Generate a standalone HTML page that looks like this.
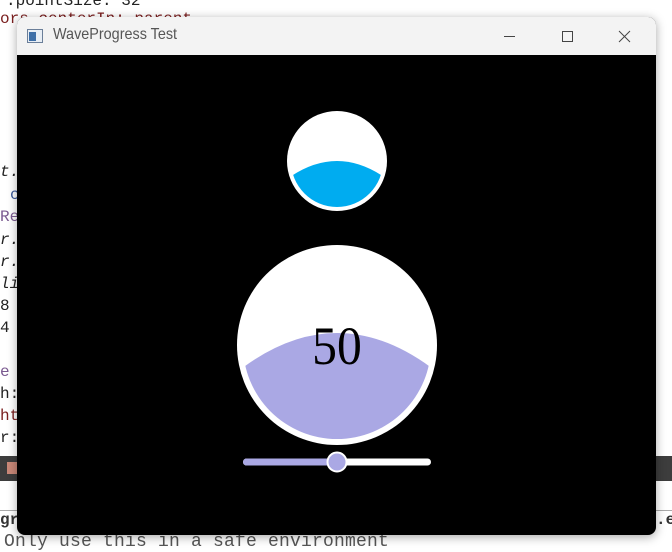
<!DOCTYPE html>
<html><head><meta charset="utf-8"><style>
html,body{margin:0;padding:0;width:672px;height:547px;overflow:hidden;background:#fff;font-family:"Liberation Mono",monospace;}
.code{position:absolute;left:0;font-size:16px;color:#222;white-space:pre;}
.win{position:absolute;left:17px;top:17px;width:639px;height:518px;border-radius:8px;overflow:hidden;box-shadow:0 2px 10px rgba(0,0,0,.35);background:#000;}
.tb{position:absolute;left:0;top:0;width:639px;height:38px;background:#f3f3f3;font-family:"Liberation Sans",sans-serif;font-size:15px;color:#555;}
</style></head><body>
<div class="code" style="top:-8px;left:6px">.pointSize: 32</div>
<div class="code" style="top:10px;left:0;color:#7a1f1f">ors.centerIn: parent</div>
<div class="code" style="top:163px;font-style:italic">t.</div>
<div class="code" style="top:186px;left:10px;color:#3b5998">c</div>
<div class="code" style="top:208px;color:#7a5a90">Re</div>
<div class="code" style="top:231px;font-style:italic">r.</div>
<div class="code" style="top:253px;font-style:italic">r.</div>
<div class="code" style="top:275px;font-style:italic">li</div>
<div class="code" style="top:297px">8</div>
<div class="code" style="top:319px">4</div>
<div class="code" style="top:363px;color:#7a5a90">e</div>
<div class="code" style="top:385px">h:</div>
<div class="code" style="top:407px;color:#7a1f1f">ht</div>
<div class="code" style="top:429px">r:</div>
<div style="position:absolute;left:0;top:456px;width:672px;height:25px;background:#3d3d3d"></div>
<div style="position:absolute;left:7px;top:462px;width:10px;height:12px;background:#c98878"></div>
<div style="position:absolute;left:0;top:510px;width:672px;height:1px;background:#aaa"></div>
<div class="code" style="top:511px;font-weight:bold;color:#333">gr</div>
<div class="code" style="top:511px;left:656px;font-weight:bold;color:#333">.e</div>
<div class="code" style="top:532px;left:4px;color:#555;font-size:18px;letter-spacing:0.2px">Only use this in a safe environment</div>
<div class="win">
<div class="tb">
<svg style="position:absolute;left:10px;top:12px" width="16" height="14"><rect x="0.5" y="0.5" width="15" height="13" fill="#e8eef5" stroke="#6b7f99"/><rect x="2" y="3" width="7" height="9" fill="#3d6fa8"/></svg>
<span style="position:absolute;left:36px;top:9px;font-size:16px;transform:scaleX(0.9);transform-origin:left">WaveProgress Test</span>
<svg style="position:absolute;left:480px;top:10px" width="150" height="20"><line x1="7" y1="9.5" x2="18" y2="9.5" stroke="#444"/><rect x="65.5" y="4.5" width="10" height="10" fill="none" stroke="#444"/><path d="M122 4L133 15M133 4L122 15" stroke="#444"/></svg>
</div>
</div>
<svg style="position:absolute;left:0;top:0" width="672" height="547">
<defs>
<clipPath id="c1"><circle cx="337" cy="161" r="46"/></clipPath>
<clipPath id="c2"><circle cx="337" cy="345" r="94"/></clipPath>
</defs>
<circle cx="337" cy="161" r="50" fill="#fff"/>
<path clip-path="url(#c1)" d="M287 179 Q337 143 387 179 L387 215 L287 215Z" fill="#00acf0"/>
<circle cx="337" cy="345" r="100" fill="#fff"/>
<path clip-path="url(#c2)" d="M237 372 Q337 294 437 372 L437 450 L237 450Z" fill="#aaa8e4"/>
<text x="337" y="364" text-anchor="middle" font-family="Liberation Serif,serif" font-size="54" fill="#000" transform="translate(337 0) scale(0.92 1) translate(-337 0)">50</text>
<rect x="243" y="458.5" width="188" height="7" rx="3.5" fill="#fff"/>
<rect x="243" y="458.5" width="94" height="7" rx="3.5" fill="#aaa8e4"/>
<circle cx="337" cy="462" r="9.5" fill="#aaa8e4" stroke="#fff" stroke-width="2"/>
</svg>
</body></html>
